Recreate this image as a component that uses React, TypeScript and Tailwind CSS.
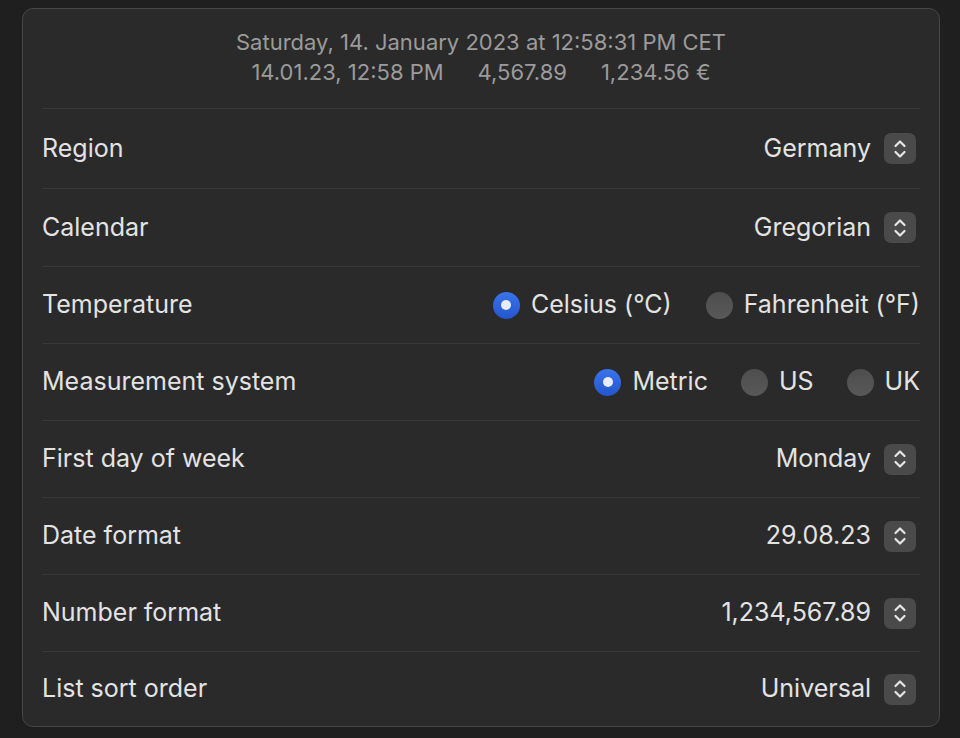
import React from "react";

const font = { fontFamily: "Inter, 'Noto Sans', sans-serif" };

function Stepper() {
  return (
    <div className="ml-[13px] mr-[4px] flex h-[31px] w-[32px] items-center justify-center rounded-[7px] bg-[#4a4a4a]">
      <svg width="14" height="22" viewBox="0 0 14 22" fill="none">
        <path d="M2.5 8 L7 3.5 L11.5 8" stroke="#e6e6e6" strokeWidth="2.2" strokeLinecap="round" strokeLinejoin="round" />
        <path d="M2.5 14 L7 18.5 L11.5 14" stroke="#e6e6e6" strokeWidth="2.2" strokeLinecap="round" strokeLinejoin="round" />
      </svg>
    </div>
  );
}

function Radio({ label, checked }: { label: string; checked?: boolean }) {
  return (
    <div className="flex items-center gap-[11px]">
      {checked ? (
        <span className="flex h-[27px] w-[27px] items-center justify-center rounded-full bg-gradient-to-b from-[#3a74ec] to-[#2456cc]">
          <span className="h-[10px] w-[10px] rounded-full bg-[#e8ecff]" />
        </span>
      ) : (
        <span className="h-[27px] w-[27px] rounded-full bg-gradient-to-b from-[#4e4e4e] to-[#585858]" />
      )}
      <span>{label}</span>
    </div>
  );
}

const popups: [string, string][] = [
  ["Region", "Germany"],
  ["Calendar", "Gregorian"],
];

const popups2: [string, string][] = [
  ["First day of week", "Monday"],
  ["Date format", "29.08.23"],
  ["Number format", "1,234,567.89"],
  ["List sort order", "Universal"],
];

function Row({ label, children, h = "h-[77px]" }: { label: string; children: React.ReactNode; h?: string }) {
  return (
    <div className={`flex items-center justify-between border-t border-[#383838] ${h}`}>
      <span>{label}</span>
      <div className="flex items-center">{children}</div>
    </div>
  );
}

export default function App() {
  return (
    <div className="min-h-[738px] bg-[#1f1f1f] pt-[8px] pl-[22px] pr-[20px]" style={font}>
      <div className="rounded-[11px] border border-[#464646] bg-[#2a2a2a] px-[19px] text-[25px] text-[#e3e3e3]">
        <div className="flex h-[99px] flex-col items-center pt-[18px] text-[22px] leading-[30px] text-[#9b9b9b]">
          <div>Saturday, 14. January 2023 at 12:58:31 PM CET</div>
          <div className="flex gap-[34px]">
            <span>14.01.23, 12:58 PM</span>
            <span>4,567.89</span>
            <span>1,234.56 €</span>
          </div>
        </div>
        {popups.map(([l, v], i) => (
          <Row key={l} label={l} h={i === 0 ? "h-[80px]" : "h-[78px]"}>
            <span>{v}</span>
            <Stepper />
          </Row>
        ))}
        <Row label="Temperature">
          <div className="flex items-center gap-[34px]">
            <Radio label="Celsius (°C)" checked />
            <Radio label="Fahrenheit (°F)" />
          </div>
        </Row>
        <Row label="Measurement system">
          <div className="flex items-center gap-[33px]">
            <Radio label="Metric" checked />
            <Radio label="US" />
            <Radio label="UK" />
          </div>
        </Row>
        {popups2.map(([l, v], i) => (
          <Row key={l} label={l} h={i === 3 ? "h-[75px]" : "h-[77px]"}>
            <span>{v}</span>
            <Stepper />
          </Row>
        ))}
      </div>
    </div>
  );
}
